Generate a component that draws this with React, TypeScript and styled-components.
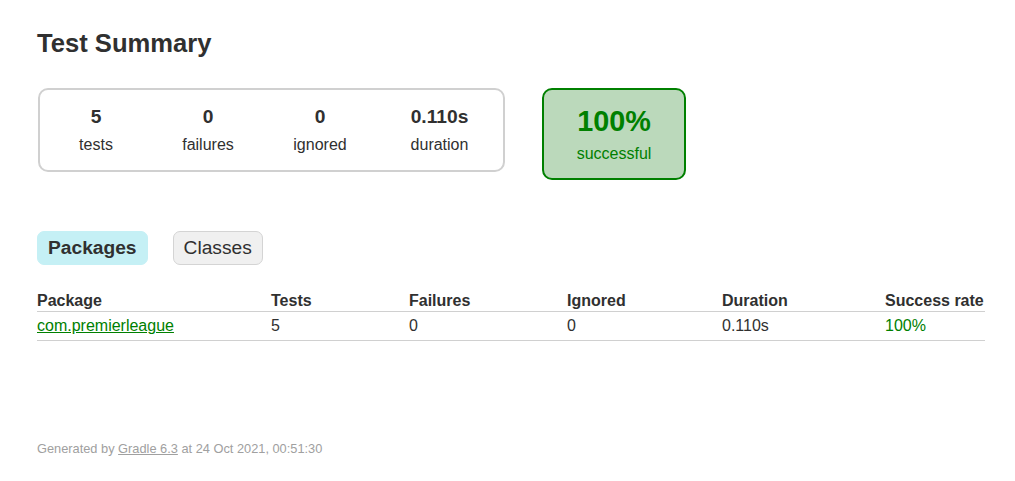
import React from 'react'
import styled, { createGlobalStyle } from 'styled-components'

const GlobalStyle = createGlobalStyle`
  body {
    margin: 0;
    padding: 0;
    font-family: "Liberation Sans", Arial, Helvetica, sans-serif;
    font-size: 16px;
    color: #303030;
    background: #ffffff;
  }
`

const packages = [
  { name: 'com.premierleague', tests: 5, failures: 0, ignored: 0, duration: '0.110s', rate: '100%' },
]

const App = (): JSX.Element => {
  return (
    <>
      <GlobalStyle />
      <Content>
        <Title>Test Summary</Title>
        <Summary>
          <SummaryGroup>
            <InfoBox>
              <Counter>5</Counter>
              <Label>tests</Label>
            </InfoBox>
            <InfoBox>
              <Counter>0</Counter>
              <Label>failures</Label>
            </InfoBox>
            <InfoBox>
              <Counter>0</Counter>
              <Label>ignored</Label>
            </InfoBox>
            <InfoBox wide>
              <Counter>0.110s</Counter>
              <Label>duration</Label>
            </InfoBox>
          </SummaryGroup>
          <SuccessRate>
            <Percent>100%</Percent>
            <Label>successful</Label>
          </SuccessRate>
        </Summary>

        <TabLinks>
          <Tab selected>Packages</Tab>
          <Tab>Classes</Tab>
        </TabLinks>

        <Table>
          <colgroup>
            <col style={{ width: 234 }} />
            <col style={{ width: 138 }} />
            <col style={{ width: 158 }} />
            <col style={{ width: 155 }} />
            <col style={{ width: 163 }} />
            <col style={{ width: 100 }} />
          </colgroup>
          <thead>
            <tr>
              <Th>Package</Th>
              <Th>Tests</Th>
              <Th>Failures</Th>
              <Th>Ignored</Th>
              <Th>Duration</Th>
              <Th>Success rate</Th>
            </tr>
          </thead>
          <tbody>
            {packages.map((p) => (
              <tr key={p.name}>
                <Td success><a href="#">{p.name}</a></Td>
                <Td>{p.tests}</Td>
                <Td>{p.failures}</Td>
                <Td>{p.ignored}</Td>
                <Td>{p.duration}</Td>
                <Td success>{p.rate}</Td>
              </tr>
            ))}
          </tbody>
        </Table>

        <Footer>
          Generated by <a href="#">Gradle 6.3</a> at 24 Oct 2021, 00:51:30
        </Footer>
      </Content>
    </>
  )
}

export default App

const Content = styled.div`
  padding: 28px 30px 30px 37px;
`
const Title = styled.h1`
  margin: 0 0 29px;
  font-size: 25.6px;
  line-height: 30px;
  font-weight: bold;
  white-space: nowrap;
`
const Summary = styled.div`
  display: flex;
  align-items: flex-start;
  padding: 1px;
  margin-bottom: 40px;
`
const SummaryGroup = styled.div`
  display: flex;
  border: solid 2px #d0d0d0;
  border-radius: 10px;
`
const InfoBox = styled.div<{ wide?: boolean }>`
  width: ${(p) => (p.wide ? '127px' : '112px')};
  padding: 16px 0;
  text-align: center;
`
const Counter = styled.p`
  margin: 0 0 8px;
  font-size: 19.2px;
  line-height: 22px;
  font-weight: bold;
`
const Label = styled.p`
  margin: 0;
  line-height: 18px;
`
const SuccessRate = styled.div`
  width: 140px;
  margin-left: 37px;
  padding: 15px 0;
  text-align: center;
  color: #008000;
  background-color: #bbd9bb;
  border: solid 2px #008000;
  border-radius: 10px;
`
const Percent = styled.p`
  margin: 0 0 8px;
  font-size: 28.8px;
  line-height: 32px;
  font-weight: bold;
`
const TabLinks = styled.ul`
  display: flex;
  list-style: none;
  margin: 0 0 16px;
  padding: 10px 0;
`
const Tab = styled.li<{ selected?: boolean }>`
  padding: 5px 10px;
  margin-right: 25px;
  border-radius: 7px;
  border: solid 1px ${(p) => (p.selected ? '#c5f0f5' : '#d4d4d4')};
  background-color: ${(p) => (p.selected ? '#c5f0f5' : '#f0f0f0')};
  font-size: 19.2px;
  line-height: 22px;
  font-weight: ${(p) => (p.selected ? 'bold' : 'normal')};
`
const Table = styled.table`
  width: 948px;
  table-layout: fixed;
  border-collapse: collapse;
  border-bottom: solid #d0d0d0 1px;
`
const Th = styled.th`
  text-align: left;
  white-space: nowrap;
  padding: 1px 0;
  line-height: 18px;
  font-weight: bold;
  border-bottom: solid #d0d0d0 1px;
`
const Td = styled.td<{ success?: boolean }>`
  white-space: nowrap;
  padding: 5px 0;
  line-height: 18px;
  color: ${(p) => (p.success ? '#008000' : '#303030')};

  a {
    color: #008000;
  }
`
const Footer = styled.div`
  margin-top: 100px;
  font-size: 12.8px;
  line-height: 15px;
  white-space: nowrap;
  color: #a0a0a0;

  a {
    color: #a0a0a0;
  }
`
